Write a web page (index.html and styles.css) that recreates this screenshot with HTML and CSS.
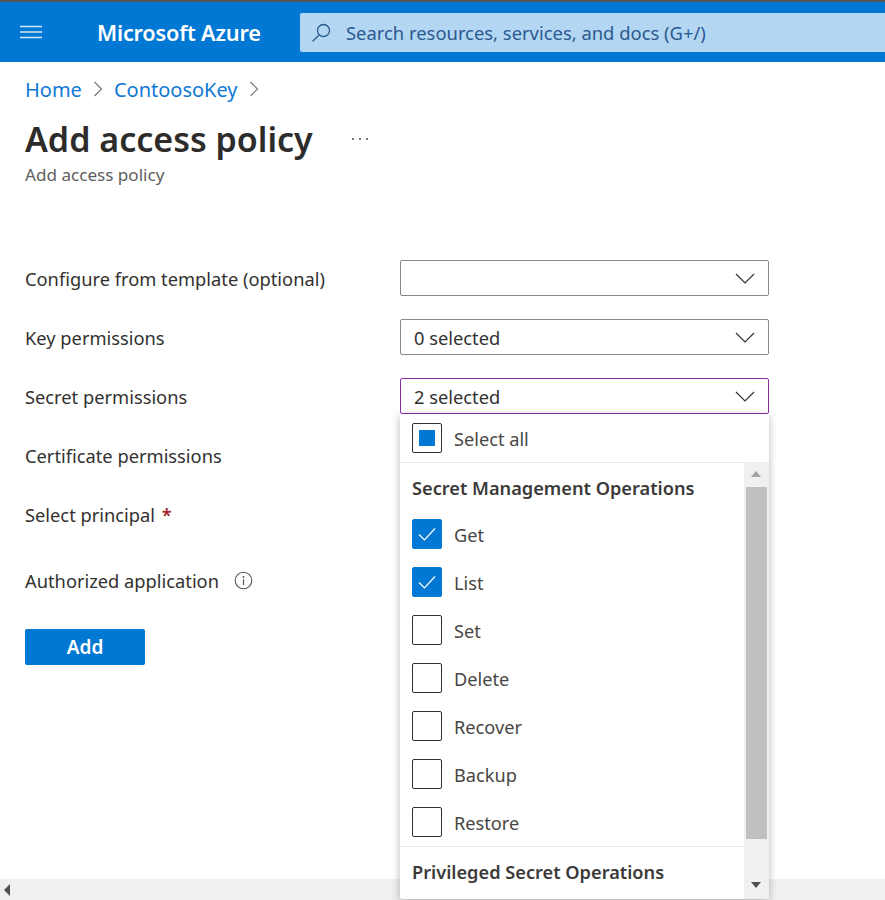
FILE: index.html
```html
<!DOCTYPE html>
<html lang="en">
<head>
    <meta charset="UTF-8">
    <meta name="viewport" content="width=device-width, initial-scale=1.0">
    <title>Add access policy - Microsoft Azure</title>
    <link rel="stylesheet" href="styles.css">
</head>
<body>
    <header class="topbar">
        <div class="menu-btn">
            <svg width="22" height="14" viewBox="0 0 22 14"><path d="M0 1.5H22M0 7H22M0 12.5H22" stroke="#d5e8f7" stroke-width="1.4" fill="none"/></svg>
        </div>
        <div class="brand">Microsoft Azure</div>
        <div class="search">
            <svg width="20" height="20" viewBox="0 0 20 20"><circle cx="12.5" cy="7.5" r="6" stroke="#2b5a8f" stroke-width="1.3" fill="none"/><path d="M8 12L1.5 18.5" stroke="#2b5a8f" stroke-width="1.3" fill="none"/></svg>
            <span>Search resources, services, and docs (G+/)</span>
        </div>
    </header>

    <main class="content">
        <nav class="crumbs">
            <a>Home</a>
            <svg width="10" height="16" viewBox="0 0 10 16"><path d="M1.5 1L8.5 8L1.5 15" stroke="#777" stroke-width="1.2" fill="none"/></svg>
            <a>ContoosoKey</a>
            <svg width="10" height="16" viewBox="0 0 10 16"><path d="M1.5 1L8.5 8L1.5 15" stroke="#777" stroke-width="1.2" fill="none"/></svg>
        </nav>
        <div class="title-row">
            <h1>Add access policy</h1>
            <span class="more">
                <svg width="18" height="4" viewBox="0 0 18 4"><circle cx="2" cy="2" r="1" fill="#444"/><circle cx="9" cy="2" r="1" fill="#444"/><circle cx="16" cy="2" r="1" fill="#444"/></svg>
            </span>
        </div>
        <p class="subtitle">Add access policy</p>

        <form class="form">
            <div class="row">
                <label>Configure from template (optional)</label>
                <div class="select"><span></span><svg class="chev" width="20" height="11" viewBox="0 0 20 11"><path d="M1 1L10 10L19 1" stroke="#333" stroke-width="1.2" fill="none"/></svg></div>
            </div>
            <div class="row">
                <label>Key permissions</label>
                <div class="select"><span>0 selected</span><svg class="chev" width="20" height="11" viewBox="0 0 20 11"><path d="M1 1L10 10L19 1" stroke="#333" stroke-width="1.2" fill="none"/></svg></div>
            </div>
            <div class="row">
                <label>Secret permissions</label>
                <div class="select open"><span>2 selected</span><svg class="chev" width="20" height="11" viewBox="0 0 20 11"><path d="M1 1L10 10L19 1" stroke="#333" stroke-width="1.2" fill="none"/></svg></div>
            </div>
            <div class="row">
                <label>Certificate permissions</label>
            </div>
            <div class="row">
                <label>Select principal <span class="req">*</span></label>
            </div>
            <div class="row row-auth">
                <label>Authorized application</label>
                <svg class="info" width="19" height="19" viewBox="0 0 19 19"><circle cx="9.5" cy="9.5" r="8.3" stroke="#555" stroke-width="1.1" fill="none"/><circle cx="9.5" cy="6" r="0.9" fill="#555"/><path d="M9.5 8.3V14" stroke="#555" stroke-width="1.2"/></svg>
            </div>
            <button type="button" class="add-btn">Add</button>
        </form>
    </main>

    <div class="dropdown">
        <div class="opt select-all">
            <span class="box"><i class="partial"></i></span>
            <span class="opt-text">Select all</span>
        </div>
        <div class="list">
            <div class="items">
                <div class="group group-first">Secret Management Operations</div>
                <div class="opt"><span class="box checked"><svg width="20" height="16" viewBox="0 0 20 16"><path d="M2 8.5L7.5 14L18 2.5" stroke="#fff" stroke-width="1.2" fill="none"/></svg></span><span class="opt-text">Get</span></div>
                <div class="opt"><span class="box checked"><svg width="20" height="16" viewBox="0 0 20 16"><path d="M2 8.5L7.5 14L18 2.5" stroke="#fff" stroke-width="1.2" fill="none"/></svg></span><span class="opt-text">List</span></div>
                <div class="opt"><span class="box"></span><span class="opt-text">Set</span></div>
                <div class="opt"><span class="box"></span><span class="opt-text">Delete</span></div>
                <div class="opt"><span class="box"></span><span class="opt-text">Recover</span></div>
                <div class="opt"><span class="box"></span><span class="opt-text">Backup</span></div>
                <div class="opt"><span class="box"></span><span class="opt-text">Restore</span></div>
                <div class="group group-next">Privileged Secret Operations</div>
            </div>
            <div class="vscroll">
                <div class="arrow-up"></div>
                <div class="thumb"></div>
                <div class="arrow-down"></div>
            </div>
        </div>
    </div>

    <div class="hscroll"><div class="arrow-left"></div></div>
</body>
</html>
```

FILE: styles.css
```css
*{
    margin: 0;
    padding: 0;
    box-sizing: border-box;
}
html, body{
    height: 900px;
    overflow: hidden;
}
body{
    font-family: "Noto Sans", "Open Sans", sans-serif;
    color: #323130;
    background: #fff;
    position: relative;
}
.topbar{
    height: 62px;
    background: #0078d4;
    border-top: 2px solid #555;
    display: flex;
    align-items: center;
}
.menu-btn{
    width: 98px;
    padding-left: 20px;
    display: flex;
    flex: none;
}
.brand{
    width: 202px;
    flex: none;
    color: #fff;
    font-size: 21.7px;
    font-weight: 600;
    letter-spacing: -0.2px;
    margin-left: -1px;
    margin-right: 1px;
}
.search{
    flex: 1;
    height: 39px;
    margin-top: 1px;
    background: #b3d6f2;
    border-radius: 2px 0 0 2px;
    display: flex;
    align-items: center;
    gap: 15px;
    padding-left: 11px;
    color: #2b5a8f;
    font-size: 18.4px;
}
.content{
    padding: 14px 25px 0;
}
.crumbs{
    display: flex;
    align-items: center;
    height: 26px;
    font-size: 20px;
    color: #0f78d4;
    gap: 11px;
}
.title-row{
    display: flex;
    align-items: center;
    margin-top: 14px;
    height: 46px;
}
h1{
    font-size: 34px;
    font-weight: 600;
    color: #2d2c2b;
}
.more{
    display: flex;
    margin-left: 38px;
}
.subtitle{
    font-size: 17.1px;
    color: #605e5c;
    margin-top: 1px;
    line-height: 24px;
}
.form{
    margin-top: 73px;
}
.row{
    display: flex;
    align-items: center;
    height: 36px;
    margin-bottom: 23px;
    font-size: 18.3px;
}
.row label{
    width: 375px;
    flex: none;
    padding-top: 1px;
}
.row-auth{
    margin-top: 30px;
    margin-bottom: 31px;
}
.row-auth label{
    width: auto;
}
.info{
    margin-left: 15px;
}
.req{
    color: #a4262c;
    font-weight: 600;
    margin-left: 2px;
}
.select{
    width: 369px;
    height: 36px;
    border: 1px solid #8a8886;
    border-radius: 2px;
    display: flex;
    align-items: center;
    justify-content: space-between;
    padding: 0 13px;
}
.select span{
    padding-top: 1px;
}
.select.open{
    border-color: #8a2da5;
}
.add-btn{
    display: block;
    width: 120px;
    height: 36px;
    border: none;
    border-radius: 2px;
    background: #0078d4;
    color: #fff;
    font-family: inherit;
    font-size: 19px;
    font-weight: 600;
}
.dropdown{
    position: absolute;
    left: 400px;
    top: 414px;
    width: 369px;
    height: 485px;
    background: #fff;
    border-radius: 0 0 2px 2px;
    box-shadow: 0 2px 8px rgba(0, 0, 0, 0.28);
    z-index: 2;
    font-size: 18.2px;
    display: flex;
    flex-direction: column;
}
.opt{
    height: 48px;
    display: flex;
    align-items: center;
    padding-left: 12px;
    gap: 12px;
    color: #484644;
}
.opt-text{
    padding-top: 2px;
}
.select-all{
    height: 49px;
    border-bottom: 1px solid #edebe9;
}
.box{
    width: 30px;
    height: 30px;
    border: 1px solid #323130;
    border-radius: 2px;
    display: flex;
    align-items: center;
    justify-content: center;
    flex: none;
}
.box.checked{
    background: #0078d4;
    border-color: #0078d4;
}
.partial{
    display: block;
    width: 16px;
    height: 16px;
    background: #0078d4;
}
.list{
    flex: 1;
    display: flex;
    min-height: 0;
}
.items{
    flex: 1;
}
.group{
    height: 49px;
    display: flex;
    align-items: center;
    padding-left: 12px;
    font-weight: 600;
    color: #3b3a39;
}
.group-first{
    height: 47px;
    padding-top: 3px;
}
.group-next{
    border-top: 1px solid #edebe9;
    padding-top: 2px;
}
.vscroll{
    width: 25px;
    flex: none;
    background: #f0f0f0;
    position: relative;
    display: flex;
    flex-direction: column;
    align-items: center;
    padding-top: 24px;
}
.thumb{
    width: 21px;
    height: 352px;
    background: #c0c0c0;
}
.arrow-up, .arrow-down{
    position: absolute;
    left: 7px;
    width: 0;
    height: 0;
    border-left: 5.5px solid transparent;
    border-right: 5.5px solid transparent;
}
.arrow-up{
    top: 8px;
    border-bottom: 6px solid #a3a3a3;
}
.arrow-down{
    bottom: 11px;
    border-top: 6px solid #505050;
}
.hscroll{
    position: absolute;
    left: 0;
    right: 0;
    bottom: 0;
    height: 21px;
    background: #f0f0f0;
    display: flex;
    align-items: center;
    padding-left: 4px;
}
.arrow-left{
    width: 0;
    height: 0;
    border-top: 6px solid transparent;
    border-bottom: 6px solid transparent;
    border-right: 6px solid #505050;
}
```
